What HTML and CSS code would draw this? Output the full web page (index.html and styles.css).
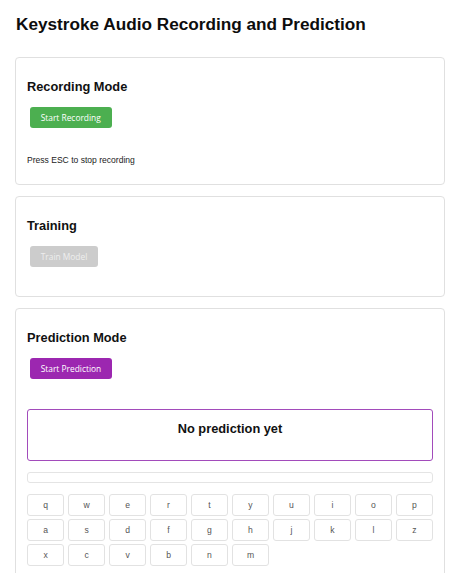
FILE: index.html
```html
<!DOCTYPE html>
<html>
<head>
<meta charset="utf-8">
<link rel="stylesheet" href="styles.css">
</head>
<body>
<h1 class="title">Keystroke Audio Recording and Prediction</h1>

<section class="card">
  <h2 class="card-title">Recording Mode</h2>
  <button class="btn btn-green">Start Recording</button>
  <div class="spacer"></div>
  <p class="hint">Press ESC to stop recording</p>
</section>

<section class="card">
  <h2 class="card-title">Training</h2>
  <button class="btn btn-disabled" disabled>Train Model</button>
  <div class="spacer"></div>
</section>

<section class="card">
  <h2 class="card-title">Prediction Mode</h2>
  <button class="btn btn-purple">Start Prediction</button>
  <div class="spacer"></div>
  <div class="prediction">
    <div class="prediction-text">No prediction yet</div>
  </div>
  <div class="bar"></div>
  <div class="keys">
    <div class="key">q</div><div class="key">w</div><div class="key">e</div><div class="key">r</div><div class="key">t</div><div class="key">y</div><div class="key">u</div><div class="key">i</div><div class="key">o</div><div class="key">p</div>
    <div class="key">a</div><div class="key">s</div><div class="key">d</div><div class="key">f</div><div class="key">g</div><div class="key">h</div><div class="key">j</div><div class="key">k</div><div class="key">l</div><div class="key">z</div>
    <div class="key">x</div><div class="key">c</div><div class="key">v</div><div class="key">b</div><div class="key">n</div><div class="key">m</div>
  </div>
</section>
</body>
</html>
```

FILE: styles.css
```css
html, body {
  margin: 0;
  padding: 0;
  background: #ffffff;
}
body {
  padding: 0 5px 0 15px;
  font-family: "Liberation Sans", Arial, sans-serif;
  color: #111;
}
.title {
  font-size: 17.2px;
  line-height: 20px;
  font-weight: bold;
  margin: 14px 0 23px 1px;
  color: #0d0d0d;
}
.card {
  border: 1px solid #e0e0e0;
  border-radius: 4px;
  padding: 11px;
  margin-bottom: 11px;
}
.card-title {
  font-size: 12.8px;
  line-height: 15px;
  font-weight: bold;
  margin: 10px 0 0 0;
  color: #111;
}
.btn {
  display: block;
  margin: 13.4px 2.7px 2.7px 2.7px;
  height: 21px;
  padding: 0 11px;
  border: none;
  border-radius: 3px;
  font-family: "Open Sans", "Noto Sans", sans-serif;
  font-size: 8.4px;
  color: #ffffff;
}
.btn-green { background: #4caf50; }
.btn-purple { background: #9c27b0; }
.btn-disabled { background: #cccccc; color: #eeeeee; }
.spacer { height: 15px; }
.hint {
  margin: 8.6px 0 8px 0;
  font-size: 8.56px;
  line-height: 10px;
  color: #222;
}
.prediction {
  margin-top: 12px;
  border: 1.5px solid #a24bbb;
  border-radius: 3px;
  padding: 11px 10px 24px 10px;
  text-align: center;
}
.prediction-text {
  font-size: 12.8px;
  line-height: 15px;
  font-weight: bold;
  color: #111;
}
.bar {
  margin-top: 11.3px;
  height: 11.3px;
  box-sizing: border-box;
  border: 1px solid #e4e4e4;
  border-radius: 3px;
}
.keys {
  margin-top: 11px;
  display: grid;
  grid-template-columns: repeat(10, 1fr);
  column-gap: 3.6px;
  row-gap: 3.3px;
}
.key {
  height: 21.7px;
  box-sizing: border-box;
  border: 1px solid #e2e2e2;
  border-radius: 3px;
  display: flex;
  align-items: center;
  justify-content: center;
  font-size: 8.6px;
  color: #555;
}
```
